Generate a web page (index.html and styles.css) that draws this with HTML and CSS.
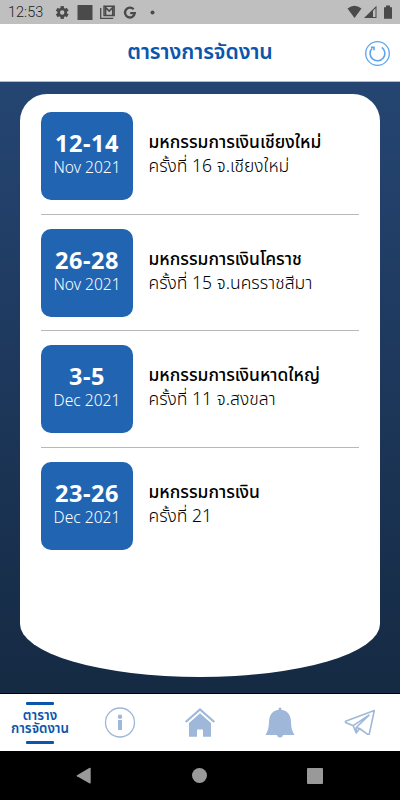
FILE: index.html
```html
<!DOCTYPE html>
<html lang="th">
<head>
    <meta charset="UTF-8">
    <meta name="viewport" content="width=device-width, initial-scale=1.0">
    <title>ตารางการจัดงาน</title>
    <link rel="stylesheet" href="styles.css">
</head>
<body>
    <div class="status-bar">
        <span class="clock">12:53</span>
        <svg class="status-left" width="104" height="24" viewBox="0 0 104 24">
            <g fill="#4a4a4a">
                <g transform="translate(12.2 12.5)">
                    <circle r="3.5" fill="none" stroke="#4a4a4a" stroke-width="2.6"/>
                    <rect x="-1.7" y="-6.4" width="3.4" height="3"/>
                    <rect x="-1.7" y="-6.4" width="3.4" height="3" transform="rotate(60)"/>
                    <rect x="-1.7" y="-6.4" width="3.4" height="3" transform="rotate(120)"/>
                    <rect x="-1.7" y="-6.4" width="3.4" height="3" transform="rotate(180)"/>
                    <rect x="-1.7" y="-6.4" width="3.4" height="3" transform="rotate(240)"/>
                    <rect x="-1.7" y="-6.4" width="3.4" height="3" transform="rotate(300)"/>
                </g>
                <rect x="27.5" y="5" width="15" height="15"/>
                <circle cx="102.5" cy="12.5" r="2"/>
            </g>
            <g fill="none" stroke="#4a4a4a">
                <path d="M50.7 8v10.3h12.5" stroke-width="1.3"/>
                <path d="M54 6.3h10.2v9.2H54z" stroke-width="1.4"/>
                <path d="M55.5 15.5v-8l3.7 3.6 3.6-3.6v8" stroke-width="1.7"/>
                <path d="M83.6 9.3a4.9 4.9 0 1 0 1.2 3.9h-4.6" stroke-width="2.3"/>
            </g>
        </svg>
        <svg class="status-right" width="48" height="24" viewBox="0 0 48 24">
            <g fill="#4a4a4a">
                <path d="M.5 8.5Q7.500 3 14.500 8.500L7.500 18z"/>
                <path d="M17 18 29.500 5.800V18z"/>
                <path d="M37 7.200h2V5.500h4v1.700h2v11.500h-8z"/>
            </g>
            <path d="M26 10.800 28.500 8.300V17H26z" fill="#bfbfbf"/>
        </svg>
    </div>

    <div class="header">
        <h1>ตารางการจัดงาน</h1>
        <svg class="refresh" width="26" height="26" viewBox="0 0 26 26" fill="none" stroke="#5ea4ec">
            <circle cx="13.5" cy="12.5" r="11.8" stroke-width="1.3"/>
            <path d="M17.800 6.400a7.400 7.400 0 1 1-9.600.8M7 6.300h3v3" stroke-width="1.600"/>
        </svg>
    </div>

    <div class="content">
        <div class="card">
            <div class="event">
                <div class="date"><b>12-14</b><span>Nov 2021</span></div>
                <div class="info"><b>มหกรรมการเงินเชียงใหม่</b><span>ครั้งที่ 16 จ.เชียงใหม่</span></div>
            </div>
            <div class="event">
                <div class="date"><b>26-28</b><span>Nov 2021</span></div>
                <div class="info"><b>มหกรรมการเงินโคราช</b><span>ครั้งที่ 15 จ.นครราชสีมา</span></div>
            </div>
            <div class="event">
                <div class="date"><b>3-5</b><span>Dec 2021</span></div>
                <div class="info"><b>มหกรรมการเงินหาดใหญ่</b><span>ครั้งที่ 11 จ.สงขลา</span></div>
            </div>
            <div class="event">
                <div class="date"><b>23-26</b><span>Dec 2021</span></div>
                <div class="info"><b>มหกรรมการเงิน</b><span>ครั้งที่ 21</span></div>
            </div>
        </div>
    </div>

    <div class="tabs">
        <div class="tab active"><span>ตาราง</span><span>การจัดงาน</span></div>
        <div class="tab">
            <svg width="32" height="32" viewBox="0 0 32 32" fill="#9fb8d9">
                <circle cx="16" cy="15.5" r="14.5" fill="none" stroke="#9fb8d9" stroke-width="1.3"/>
                <circle cx="16" cy="9.7" r="2.2"/>
                <path d="M14 13h4v10h-4z"/>
            </svg>
        </div>
        <div class="tab">
            <svg width="32" height="32" viewBox="0 0 32 32" fill="#9fb8d9">
                <path d="M1.700 15 16 2.500 30.300 15" fill="none" stroke="#9fb8d9" stroke-width="2.200"/>
                <path d="M5 16 16 6.300 27 16v13.700h-8v-7.200h-6v7.200H5z"/>
            </svg>
        </div>
        <div class="tab">
            <svg width="32" height="32" viewBox="0 0 32 32" fill="#9fb8d9">
                <circle cx="16" cy="2" r="1.5"/>
                <path d="M16 2.700C8.500 2.700 5.300 8 5 14.500c-.2 6-.8 9-3.500 13.400h29C27.800 23.500 27.200 20.500 27 14.500 26.700 8 23.500 2.700 16 2.700z"/>
                <path d="M13 27.500h6a3 3 0 0 1-6 0z"/>
            </svg>
        </div>
        <div class="tab">
            <svg width="32" height="32" viewBox="0 0 32 32" fill="none" stroke="#9fb8d9" stroke-width="1.6" stroke-linejoin="round">
                <path d="M30.300 3.500 1.500 14.200v1.200l7.700 3.300 3 7.300 3.300-4.500 8.200 5.800h1.500zM9.200 18.700 25 8.200 12.200 20.500V26M12.200 20.500l3.300 1"/>
            </svg>
        </div>
    </div>

    <div class="nav-bar">
        <svg width="16" height="18" viewBox="0 0 16 18" fill="#999"><path d="M1 8.200 13.700.8q1-.4 1 .8v14q0 1.200-1 .8L1 9.200q-.8-.5 0-1z"/></svg>
        <span class="nav-home"></span>
        <span class="nav-recent"></span>
    </div>
</body>
</html>
```
FILE: styles.css
```css
* { box-sizing: border-box; }
body { margin: 0; width: 400px; height: 800px; overflow: hidden; display: flex; flex-direction: column; background: #000; font-family: "Noto Sans Thai", "Noto Sans", sans-serif; }
svg { display: block; overflow: visible; flex: none; }

.status-bar { height: 24px; background: #bfbfbf; display: flex; align-items: center; padding: 0 5px 0 8px; }
.clock { font: 300 14.5px/24px Roboto, sans-serif; color: #222; width: 42px; padding-top: 2px; }
.status-right { margin-left: auto; }

.header { height: 58px; background: #fff; border-bottom: 1px solid #bbb; display: flex; align-items: center; justify-content: flex-end; padding: 0 10px 0 36px; }
h1 { flex: 1; margin: 0; padding-top: 1px; text-align: center; font-size: 21.2px; font-weight: 600; letter-spacing: -0.05px; color: #0a56ad; }
.refresh { margin-top: 2px; }

.content { height: 611px; padding: 12px 20px 16px; background: linear-gradient(#254572, #152a43); }
.card { height: 583px; background: #fff; border-radius: 27px 27px 180px 180px / 27px 27px 53px 53px; padding: 4px 21px 0; }
.event { display: flex; align-items: center; gap: 15.5px; height: 116.7px; border-bottom: 1px solid #b8b8b8; }
.event:last-child { border-bottom: none; }
.date { width: 92px; height: 88px; border-radius: 10px; background: #2165b2; color: #fff; display: flex; flex-direction: column; align-items: center; padding-top: 19px; }
.date b { font-family: "Noto Sans", sans-serif; font-size: 23.5px; line-height: 25px; letter-spacing: 0.5px; }
.date span { font-family: "Noto Sans", sans-serif; font-size: 15.6px; line-height: 22px; font-weight: 300; }
.info { display: flex; flex-direction: column; white-space: nowrap; color: #000; padding-bottom: 3px; }
.info b { font-size: 17.4px; line-height: 24px; font-weight: 500; }
.info span { font-size: 17.5px; line-height: 23px; font-weight: 300; }

.tabs { height: 58px; background: #fff; display: grid; grid-template-columns: repeat(5, 1fr); align-items: center; justify-items: center; border-top: 1px solid #000; }
.tab.active { display: flex; flex-direction: column; align-items: center; font-size: 13.4px; font-weight: 600; line-height: 13px; color: #0a56ad; white-space: nowrap; }
.tab.active::before, .tab.active::after { content: ""; width: 28px; height: 3px; border-radius: 1px; background: #0a56ad; }
.tab.active::before { margin-bottom: 5px; }
.tab.active::after { margin-top: 5px; }

.nav-bar { height: 49px; background: #000; display: flex; align-items: center; justify-content: center; gap: 100px; padding-right: 1px; }
.nav-home { width: 15px; height: 15px; border-radius: 50%; background: #999; }
.nav-recent { width: 16px; height: 16px; border-radius: 1px; background: #999; }
```
